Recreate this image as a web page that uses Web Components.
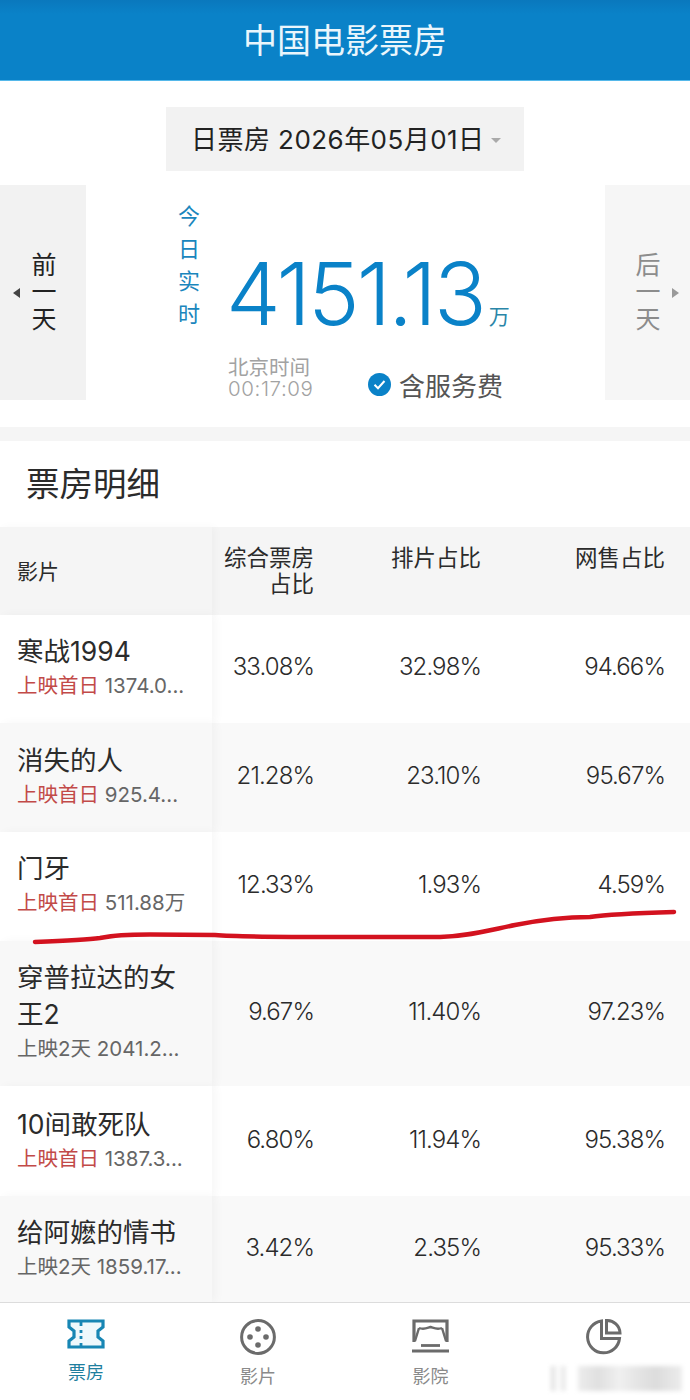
<!DOCTYPE html>
<html lang="zh-CN">
<head>
<meta charset="utf-8">
<title>中国电影票房</title>
<style>
  html, body { margin: 0; padding: 0; background: #fff; }
  body {
    width: 690px;
    height: 1400px;
    overflow: hidden;
    font-family: Inter, "Noto Sans CJK SC", sans-serif;
    color: #2b2b2b;
  }
</style>
</head>
<body>
<box-page>
  <app-header>中国电影票房</app-header>
  <date-select>日票房 2026年05月01日</date-select>
  <live-panel amount="4151.13" time="00:17:09"></live-panel>
  <section-title>票房明细</section-title>
  <box-table>
    <box-row h="108" v="38" n="18"><span slot="name">寒战1994</span><span slot="status" class="first">上映首日</span><span slot="amount">1374.0...</span><span slot="a">33.08%</span><span slot="b">32.98%</span><span slot="c">94.66%</span></box-row>
    <box-row alt h="109" v="39" n="19"><span slot="name">消失的人</span><span slot="status" class="first">上映首日</span><span slot="amount">925.4...</span><span slot="a">21.28%</span><span slot="b">23.10%</span><span slot="c">95.67%</span></box-row>
    <box-row h="109" v="39" n="18"><span slot="name">门牙</span><span slot="status" class="first">上映首日</span><span slot="amount">511.88万</span><span slot="a">12.33%</span><span slot="b">1.93%</span><span slot="c">4.59%</span></box-row>
    <box-row alt h="145" v="57" n="18"><span slot="name">穿普拉达的女王2</span><span slot="status">上映2天</span><span slot="amount">2041.2...</span><span slot="a">9.67%</span><span slot="b">11.40%</span><span slot="c">97.23%</span></box-row>
    <box-row h="110" v="40" n="20"><span slot="name">10间敢死队</span><span slot="status" class="first">上映首日</span><span slot="amount">1387.3...</span><span slot="a">6.80%</span><span slot="b">11.94%</span><span slot="c">95.38%</span></box-row>
    <box-row alt h="106" v="38" n="18"><span slot="name">给阿嬷的情书</span><span slot="status">上映2天</span><span slot="amount">1859.17...</span><span slot="a">3.42%</span><span slot="b">2.35%</span><span slot="c">95.33%</span></box-row>
  </box-table>
  <tab-bar>
    <tab-item icon="ticket" active>票房</tab-item>
    <tab-item icon="reel">影片</tab-item>
    <tab-item icon="screen">影院</tab-item>
    <tab-item icon="pie"></tab-item>
  </tab-bar>
</box-page>

<script>
// Shared font stack for the shadow roots
const FONT = 'Inter, "Noto Sans CJK SC", sans-serif';
const FONT_CJK = '"Liberation Sans", "Noto Sans CJK SC", sans-serif';

// Small helper, every element does the same thing in its constructor
function shadow(el, html) {
  el.attachShadow({ mode: 'open' });
  el.shadowRoot.innerHTML = html;
}

class BoxPage extends HTMLElement {
  constructor() {
    super();
    shadow(this, `
<style>
  :host { display: flex; flex-direction: column; position: relative; width: 690px; height: 1400px; overflow: hidden; font-family: ${FONT}; }
  svg { position: absolute; left: 0; top: 0; pointer-events: none; }
  .mark { position: absolute; top: 1366px; height: 25px; filter: blur(2px); }
  .m1 { left: 551px; width: 14px; background: linear-gradient(90deg, #d8d8d8, #fafafa 40%, #fafafa 70%, #d8d8d8); }
  .m2 { left: 578px; width: 104px; background: linear-gradient(90deg, #ececec, #e0e0e0 20%, #f0f0f0 40%, #e6e6e6 55%, #dcdcdc 75%, #ececec); }
</style>
<slot></slot>
<!-- hand drawn red line over the table -->
<svg width="690" height="1400" viewBox="0 0 690 1400">
  <path d="M35 942 C60 941 85 940 100 938 C115 935 125 934.5 150 934.5 L215 935 C240 937 280 937 340 937 L440 937 C470 936 490 930 515 925 C540 920 560 917 590 917 C610 914 640 913 674 912" fill="none" stroke="#d3121f" stroke-width="4.5" stroke-linecap="round"/>
</svg>
<div class="mark m1"></div>
<div class="mark m2"></div>`);
  }
}

class AppHeader extends HTMLElement {
  constructor() {
    super();
    shadow(this, `
<style>
  :host { display: flex; align-items: center; justify-content: center; height: 81px; background: linear-gradient(#0a78bd 0, #0a82c8 14px, #0a82c8 100%); border-bottom: 1px solid #55b8ea; box-sizing: border-box; color: #eaf6fc; font-size: 34px; padding-bottom: 4px; }
</style>
<slot></slot>`);
  }
}

class DateSelect extends HTMLElement {
  constructor() {
    super();
    shadow(this, `
<style>
  :host { display: flex; justify-content: center; padding-top: 26px; }
  .box { display: flex; align-items: center; width: 358px; height: 64px; box-sizing: border-box; padding: 0 0 3px 25px; background: #f2f2f2; color: #222; font-size: 26px; letter-spacing: 0.45px; white-space: nowrap; }
  i { margin-left: 6px; margin-top: 5px; border: 5px solid transparent; border-top-color: #aaa; border-bottom: 0; }
</style>
<div class="box"><slot></slot><i></i></div>`);
  }
}

class DayButton extends HTMLElement {
  constructor() {
    super();
    const next = this.hasAttribute('next');
    shadow(this, `
<style>
  :host { display: flex; align-items: center; flex-direction: ${next ? 'row-reverse' : 'row'}; width: ${next ? 85 : 86}px; height: 215px; background: ${next ? '#f6f6f6' : '#f2f2f2'}; color: ${next ? '#8c8c8c' : '#222'}; font-family: ${FONT_CJK}; font-size: 25px; box-sizing: border-box; padding: 0 ${next ? '11px' : '13px'}; }
  i { border: 5px solid transparent; ${next ? 'border-left: 7px solid #9a9a9a; border-right: 0;' : 'border-right: 7px solid #444; border-left: 0;'} }
  div { width: 26px; line-height: 27px; margin: ${next ? '0 11px 0 0' : '0 0 0 11px'}; text-align: center; }
</style>
<i></i><div><slot></slot></div>`);
  }
}

class LivePanel extends HTMLElement {
  constructor() {
    super();
    shadow(this, `
<style>
  :host { display: flex; justify-content: space-between; margin-top: 14px; height: 215px; }
  .mid { flex: 1; display: flex; flex-direction: column; padding-left: 92px; }
  .top { display: flex; align-items: flex-start; }
  .live { width: 22px; font-family: ${FONT_CJK}; font-size: 22px; line-height: 32.7px; text-align: center; color: #1a86bd; margin-top: 16px; }
  .num { margin: 48px 0 0 26px; font-size: 87px; font-weight: 360; line-height: 122px; height: 122px; letter-spacing: -2.8px; color: #0a82c8; white-space: nowrap; }
  .unit { font-size: 21px; color: #2a86a8; margin: 115px 0 0 5px; }
  .bottom { display: flex; padding-left: 50px; margin-top: 2px; }
  .clock { color: #a2a2a2; font-size: 20.5px; line-height: 21px; width: 140px; }
  .clock span { font-weight: 300; letter-spacing: 0.6px; }
  .fee { display: flex; align-items: center; color: #555; font-size: 26px; margin-top: 10px; height: 34px; }
  svg { margin-right: 8px; }
</style>
<day-button>前<br>一<br>天</day-button>
<div class="mid">
  <div class="top">
    <div class="live">今<br>日<br>实<br>时</div>
    <div class="num">${this.getAttribute('amount')}</div>
    <div class="unit">万</div>
  </div>
  <div class="bottom">
    <div class="clock">北京时间<br><span>${this.getAttribute('time')}</span></div>
    <div class="fee">
      <svg width="23" height="23" viewBox="0 0 23 23"><circle cx="11.5" cy="11.5" r="11.5" fill="#0a82c8"/><path d="M6.5 11.8 L10 15.2 L16.5 8" fill="none" stroke="#fff" stroke-width="2"/></svg>
      含服务费
    </div>
  </div>
</div>
<day-button next>后<br>一<br>天</day-button>`);
  }
}

class SectionTitle extends HTMLElement {
  constructor() {
    super();
    shadow(this, `
<style>
  :host { display: block; margin-top: 27px; border-top: 14px solid #f5f5f5; height: 86px; line-height: 86px; padding-left: 26px; font-size: 33.5px; color: #2b2b2b; }
</style>
<slot></slot>`);
  }
}

class BoxTable extends HTMLElement {
  constructor() {
    super();
    shadow(this, `
<style>
  :host { display: block; }
  .head { display: grid; grid-template-columns: 212px 102px 167px 184px; padding-right: 25px; height: 88px; background: #f5f5f5; color: #2b2b2b; font-size: 22.5px; line-height: 26px; white-space: nowrap; }
  .head div { text-align: right; padding-top: 18px; }
  .head .film { text-align: left; padding: 32px 0 0 17px; font-size: 21px; box-shadow: 3px 0 8px rgba(0,0,0,.03); }
</style>
<div class="head">
  <div class="film">影片</div>
  <div>综合票房<br>占比</div>
  <div>排片占比</div>
  <div>网售占比</div>
</div>
<slot></slot>`);
  }
}

class BoxRow extends HTMLElement {
  constructor() {
    super();
    // row height and the top offsets of the film name and of the values
    const h = this.getAttribute('h');
    const v = this.getAttribute('v');
    const n = this.getAttribute('n');
    shadow(this, `
<style>
  :host { display: grid; grid-template-columns: 212px 102px 167px 184px; padding-right: 25px; height: ${h}px; background: #fff; color: #2b2b2b; }
  :host([alt]) { background: #f9f9f9; }
  .film { box-sizing: border-box; padding: ${n}px 0 0 17px; background: #fff; box-shadow: 4px 0 9px rgba(0,0,0,.035); }
  :host([alt]) .film { background: #f8f8f8; }
  .name { font-size: 26.5px; line-height: 37px; width: 165px; }
  .sub { font-size: 20.5px; line-height: 29px; margin-top: 1px; white-space: nowrap; color: #666; }
  ::slotted(.first) { color: #c24a48; }
  .val { text-align: right; font-size: 24px; font-weight: 340; letter-spacing: -0.9px; line-height: 27px; padding-top: ${v}px; }
</style>
<div class="film">
  <div class="name"><slot name="name"></slot></div>
  <div class="sub"><slot name="status"></slot> <slot name="amount"></slot></div>
</div>
<div class="val"><slot name="a"></slot></div>
<div class="val"><slot name="b"></slot></div>
<div class="val"><slot name="c"></slot></div>`);
  }
}

class TabBar extends HTMLElement {
  constructor() {
    super();
    shadow(this, `
<style>
  :host { display: grid; grid-template-columns: 172px 172px 173px 173px; height: 98px; box-sizing: border-box; border-top: 1px solid #dcdcdc; background: #fff; }
</style>
<slot></slot>`);
  }
}

const TAB_ICONS = {
  ticket: `<svg width="38" height="30" viewBox="0 0 38 30"><path d="M2 2 H36 V8 L31 12 V18 L36 22 V28 H2 V22 L7 18 V12 L2 8 Z" fill="#eef8fc" stroke="#1786b4" stroke-width="3.2"/><path d="M14 2 V7 M14 11 V14 M14 17 V20 M14 24 V28" stroke="#1786b4" stroke-width="2.8"/></svg>`,
  reel: `<svg width="36" height="36" viewBox="0 0 36 36"><circle cx="18" cy="18" r="16.4" fill="none" stroke="#6b6b6b" stroke-width="3"/><circle cx="18" cy="10" r="2.8" fill="#6b6b6b"/><circle cx="18" cy="26" r="2.8" fill="#6b6b6b"/><circle cx="10" cy="18" r="2.8" fill="#6b6b6b"/><circle cx="26" cy="18" r="2.8" fill="#6b6b6b"/></svg>`,
  screen: `<svg width="37" height="34" viewBox="0 0 37 34"><path d="M2 23 V2 H35 V23" fill="none" stroke="#6b6b6b" stroke-width="3.2"/><path d="M7 9 C12 11 15 9 18.5 8 C22 9 25 11 30 9 M7 9 L3 22 M30 9 L34 22" fill="none" stroke="#6b6b6b" stroke-width="2.4"/><path d="M9 26.5 H28" stroke="#6b6b6b" stroke-width="2.8"/><path d="M0 32 H37" stroke="#6b6b6b" stroke-width="3"/></svg>`,
  pie: `<svg width="36" height="36" viewBox="0 0 36 36"><path d="M15.5 2 A16 16 0 1 0 33.5 19.5 H15.5 Z" fill="none" stroke="#6b6b6b" stroke-width="3"/><path d="M20.5 1.5 A13 13 0 0 1 34 14 H20.5 Z" fill="none" stroke="#6b6b6b" stroke-width="3"/></svg>`
};

class TabItem extends HTMLElement {
  constructor() {
    super();
    shadow(this, `
<style>
  :host { display: flex; flex-direction: column; align-items: center; padding-top: 16px; color: #8a8a8a; font-size: 18px; }
  :host([active]) { color: #1f7f9f; }
  .icon { height: 36px; display: flex; }
  .label { line-height: 22px; margin-top: 11px; }
  :host([active]) .label { margin-top: 7px; }
</style>
<div class="icon">${TAB_ICONS[this.getAttribute('icon')]}</div>
<div class="label"><slot></slot></div>`);
  }
}

window.customElements.define('day-button', DayButton);
window.customElements.define('box-page', BoxPage);
window.customElements.define('app-header', AppHeader);
window.customElements.define('date-select', DateSelect);
window.customElements.define('live-panel', LivePanel);
window.customElements.define('section-title', SectionTitle);
window.customElements.define('box-table', BoxTable);
window.customElements.define('box-row', BoxRow);
window.customElements.define('tab-bar', TabBar);
window.customElements.define('tab-item', TabItem);
</script>
</body>
</html>
